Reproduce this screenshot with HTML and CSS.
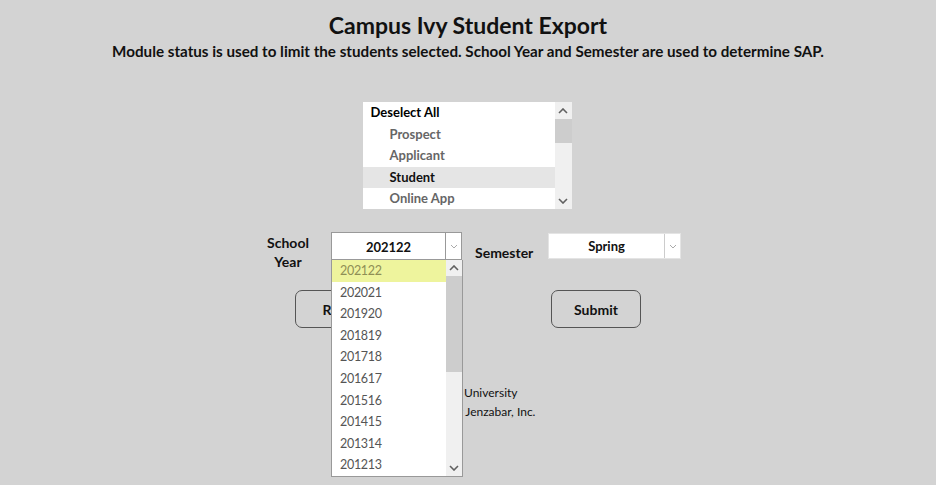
FILE: index.html
```html
<!DOCTYPE html>
<html lang="en">
<head>
  <meta charset="UTF-8">
  <title>Campus Ivy Student Export</title>
  <link rel="stylesheet" href="styles.css">
</head>
<body>
  <h1 class="title">Campus Ivy Student Export</h1>
  <p class="intro">Module status is used to limit the students selected. School Year and Semester are used to determine SAP.</p>

  <div class="status-list">
    <div class="options">
      <div class="opt head">Deselect All</div>
      <div class="opt">Prospect</div>
      <div class="opt">Applicant</div>
      <div class="opt picked">Student</div>
      <div class="opt">Online App</div>
    </div>
    <div class="scroll">
      <div class="arrow"><svg width="10" height="6" viewBox="0 0 10 6"><polyline points="1,5 5,1 9,5" fill="none" stroke="#606060" stroke-width="1.6"/></svg></div>
      <div class="thumb small"></div>
      <div class="track"></div>
      <div class="arrow"><svg width="10" height="6" viewBox="0 0 10 6"><polyline points="1,1 5,5 9,1" fill="none" stroke="#606060" stroke-width="1.6"/></svg></div>
    </div>
  </div>

  <div class="filters">
    <label class="lbl year-lbl">School Year</label>
    <div class="select year">
      <span class="value">202122</span>
      <span class="caret"><svg width="8" height="5" viewBox="0 0 8 5"><polyline points="1,1 4,4 7,1" fill="none" stroke="#aaa" stroke-width="1"/></svg></span>
      <div class="dropdown">
        <div class="items">
          <div class="item on">202122</div>
          <div class="item">202021</div>
          <div class="item">201920</div>
          <div class="item">201819</div>
          <div class="item">201718</div>
          <div class="item">201617</div>
          <div class="item">201516</div>
          <div class="item">201415</div>
          <div class="item">201314</div>
          <div class="item">201213</div>
        </div>
        <div class="scroll">
          <div class="arrow"><svg width="10" height="6" viewBox="0 0 10 6"><polyline points="1,5 5,1 9,5" fill="none" stroke="#606060" stroke-width="1.6"/></svg></div>
          <div class="thumb big"></div>
          <div class="track"></div>
          <div class="arrow"><svg width="10" height="6" viewBox="0 0 10 6"><polyline points="1,1 5,5 9,1" fill="none" stroke="#606060" stroke-width="1.6"/></svg></div>
        </div>
      </div>
    </div>
    <label class="lbl sem-lbl">Semester</label>
    <div class="select sem">
      <span class="value">Spring</span>
      <span class="caret"><svg width="8" height="5" viewBox="0 0 8 5"><polyline points="1,1 4,4 7,1" fill="none" stroke="#aaa" stroke-width="1"/></svg></span>
    </div>
  </div>

  <div class="actions">
    <button class="btn">Reset</button>
    <button class="btn">Submit</button>
  </div>

  <div class="footer">
    <div>Campus University</div>
    <div>Powered by Jenzabar, Inc.</div>
  </div>
</body>
</html>
```

FILE: styles.css
```css
html, body {
  min-height: 100%;
}
body {
  margin: 8px;
  min-height: 469px;
  background: #d3d3d3;
  color: #111;
  font-family: "Lato", "Liberation Sans", sans-serif;
}
.title {
  font-size: 23px;
  font-weight: bold;
  text-align: center;
  margin: 2px 0 0;
  line-height: 30px;
}
.intro {
  font-size: 15.2px;
  font-weight: bold;
  text-align: center;
  margin: 1px 0 0;
  line-height: 20px;
}
.status-list {
  display: flex;
  width: 209px;
  height: 107px;
  margin: 41px auto 0;
  background: #fff;
  position: relative;
  left: -1px;
}
.options {
  flex: 1;
}
.opt {
  height: 21.5px;
  line-height: 21.5px;
  font-size: 13px;
  font-weight: bold;
  color: #666;
  padding-left: 27px;
}
.opt.head {
  color: #000;
  padding-left: 8px;
}
.opt.picked {
  background: #e5e5e5;
  color: #111;
}
.scroll {
  width: 17px;
  display: flex;
  flex-direction: column;
  background: #f0f0f0;
}
.arrow {
  height: 17px;
  display: flex;
  align-items: center;
  justify-content: center;
}
.thumb { background: #cdcdcd; }
.thumb.small { height: 24px; }
.thumb.big { height: 96px; }
.track { flex: 1; }
.filters {
  display: flex;
  justify-content: center;
  align-items: flex-start;
  margin-top: 23px;
  padding-left: 6px;
}
.lbl {
  font-size: 14px;
  font-weight: bold;
  color: #111;
}
.year-lbl {
  width: 54px;
  text-align: center;
  line-height: 19px;
  margin-top: 1px;
  margin-right: 16px;
}
.sem-lbl {
  width: 62px;
  margin: 12px 11px 0 13px;
  line-height: 18px;
}
.select {
  position: relative;
  display: flex;
  background: #fff;
  font-size: 13px;
  font-weight: bold;
}
.select .value {
  flex: 1;
  text-align: center;
}
.select .caret {
  width: 15px;
  display: flex;
  align-items: center;
  justify-content: center;
}
.year {
  width: 129px;
  height: 26px;
  border: 1px solid #999;
  line-height: 28px;
}
.year .caret { border-left: 1px solid #999; }
.sem {
  width: 131px;
  height: 24px;
  margin-top: 1px;
  border: 1px solid #e4e4e4;
  line-height: 24px;
}
.sem .caret { border-left: 1px solid #ccc; }
.dropdown {
  position: absolute;
  top: 27px;
  left: -1px;
  width: 130px;
  height: 216px;
  display: flex;
  background: #fff;
  border: 1px solid #999;
  border-top: none;
  z-index: 2;
}
.items { flex: 1; }
.item {
  height: 21.6px;
  line-height: 21.6px;
  padding-left: 8px;
  font-size: 12.5px;
  letter-spacing: -0.3px;
  font-weight: normal;
  color: #555;
}
.item.on {
  background: #eef49d;
  color: #8f8f55;
}
.dropdown .scroll { width: 16px; }
.dropdown .arrow { height: 16px; }
.actions {
  display: flex;
  justify-content: center;
  gap: 166px;
  margin-top: 19px;
}
.btn {
  width: 90px;
  height: 38px;
  background: transparent;
  border: 1px solid #555;
  border-radius: 7px;
  font-family: inherit;
  font-size: 14px;
  font-weight: bold;
  color: #111;
}
.footer {
  text-align: center;
  font-size: 12px;
  line-height: 19px;
  margin-top: 55px;
}
```
